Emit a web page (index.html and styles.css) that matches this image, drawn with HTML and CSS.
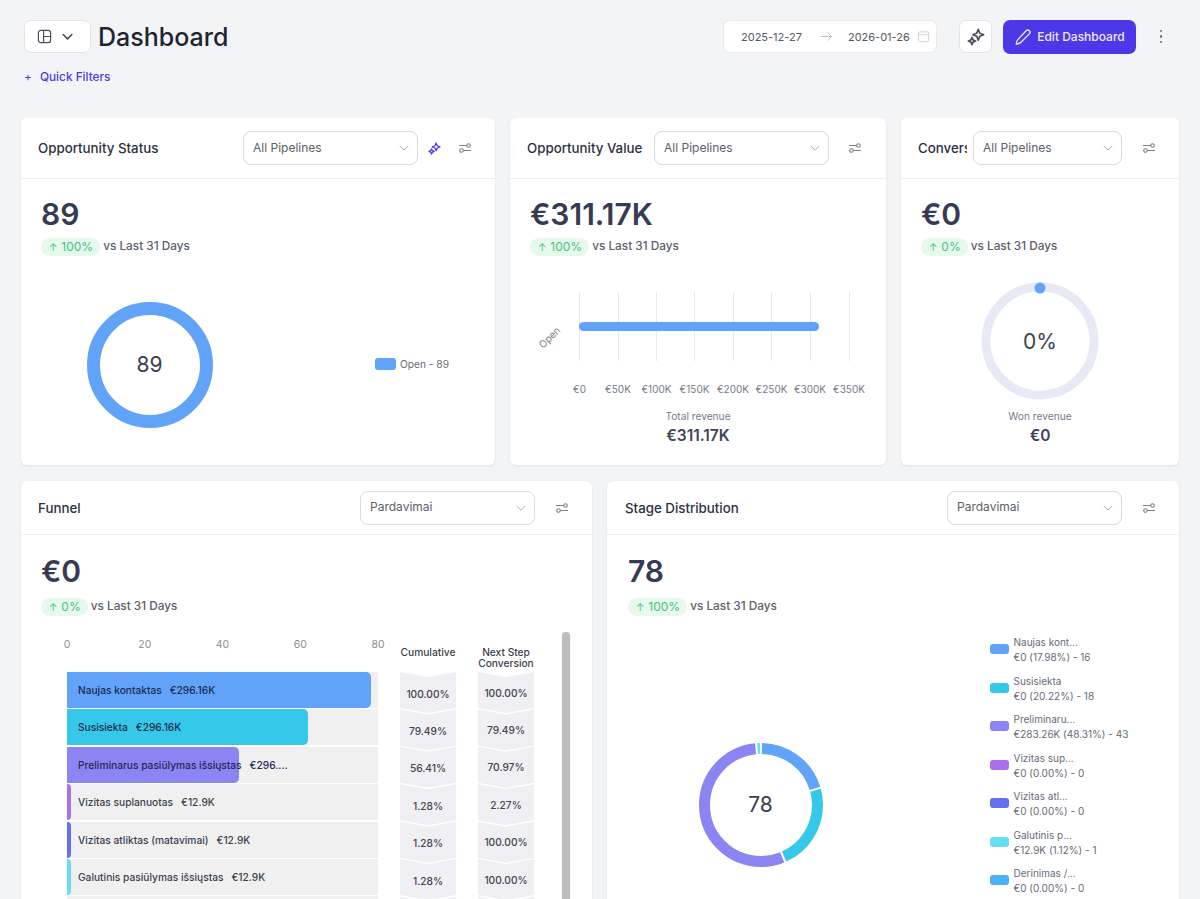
FILE: index.html
```html
<!DOCTYPE html>
<html lang="en">
<head>
<meta charset="utf-8">
<title>Dashboard</title>
<link rel="stylesheet" href="styles.css">
</head>
<body>
<svg class="defs" width="0" height="0" aria-hidden="true">
  <symbol id="sparkle" viewBox="0 0 20 20">
    <path d="M12.500 1.500l1.700 4.300 4.300 1.700-4.300 1.700-1.700 4.300-1.700-4.300-4.300-1.700 4.300-1.700z" fill="none" stroke="currentColor" stroke-width="1.900" stroke-linejoin="round"/>
    <path d="M5.500 10.500l1.200 2.800 2.800 1.200-2.800 1.200-1.200 2.800-1.200-2.800-2.800-1.200 2.800-1.200z" fill="none" stroke="currentColor" stroke-width="1.900" stroke-linejoin="round"/>
  </symbol>
  <symbol id="sliders" viewBox="0 0 14 14">
    <path d="M1.500 4.500h7M12.500 9.500h-7" fill="none" stroke="currentColor" stroke-width="1.100" stroke-linecap="round"/>
    <circle cx="10.500" cy="4.500" r="1.800" fill="none" stroke="currentColor" stroke-width="1.100"/>
    <circle cx="3.500" cy="9.500" r="1.800" fill="none" stroke="currentColor" stroke-width="1.100"/>
  </symbol>
  <symbol id="chev" viewBox="0 0 12 12">
    <path d="M2 4.200l4 4 4-4" fill="none" stroke="currentColor" stroke-width="1" stroke-linecap="round" stroke-linejoin="round"/>
  </symbol>
</svg>

<header class="topbar">
  <div class="topbar-main">
    <button class="view-btn">
      <svg class="view-icon" viewBox="0 0 16 16"><rect x="1.500" y="1.500" width="13" height="13" rx="2.500" fill="none" stroke="currentColor" stroke-width="1.300"/><path d="M7 1.500v13M7 8h7.500" fill="none" stroke="currentColor" stroke-width="1.300"/></svg>
      <svg class="view-chev" viewBox="0 0 12 12"><path d="M2 4.200l4 4 4-4" fill="none" stroke="currentColor" stroke-width="1.500" stroke-linecap="round" stroke-linejoin="round"/></svg>
    </button>
    <h1 class="page-title">Dashboard</h1>
    <div class="date-range">
      <span>2025-12-27</span>
      <svg class="date-arrow" viewBox="0 0 14 14"><path d="M1.500 7h11M8.500 3l4 4-4 4" fill="none" stroke="currentColor" stroke-width="1" stroke-linecap="round" stroke-linejoin="round"/></svg>
      <span>2026-01-26</span>
      <svg class="date-cal" viewBox="0 0 14 14"><rect x="1.500" y="2" width="11" height="10.500" rx="1.500" fill="none" stroke="currentColor" stroke-width="1"/><path d="M1.500 5h11" stroke="currentColor" stroke-width="1"/></svg>
    </div>
    <button class="ai-btn"><svg class="ai-icon"><use href="#sparkle"/></svg></button>
    <button class="edit-btn">
      <svg class="edit-icon" viewBox="0 0 16 16"><path d="M11 2.200a2 2 0 0 1 2.800 2.800l-7.600 7.700c-1 1-2.500 1.500-4.200 1.600.1-1.700.6-3.200 1.600-4.200z" fill="none" stroke="currentColor" stroke-width="1.200" stroke-linejoin="round"/></svg>
      Edit Dashboard
    </button>
    <button class="kebab"><i></i><i></i><i></i></button>
  </div>
  <div class="quick-filters"><span class="qf-plus">+</span> Quick Filters</div>
</header>

<main class="board">
  <section class="row row-top">
    <article class="card card-status">
      <header class="card-head">
        <h2 class="card-title">Opportunity Status</h2>
        <div class="select sel-175">All Pipelines<svg class="sel-chev"><use href="#chev"/></svg></div>
        <button class="icon-btn spark"><svg class="i13"><use href="#sparkle"/></svg></button>
        <button class="icon-btn after-spark"><svg class="i14"><use href="#sliders"/></svg></button>
      </header>
      <div class="card-body">
        <div class="metric">89</div>
        <div class="stat"><span class="badge"><span class="up">↑</span> 100%</span><span class="vs">vs Last 31 Days</span></div>
        <div class="donut-area">
          <div class="donut">
            <svg viewBox="0 0 126 126" width="126" height="126"><circle cx="63" cy="63" r="56.500" fill="none" stroke="#60a3f8" stroke-width="13"/></svg>
            <span class="donut-label">89</span>
          </div>
          <div class="mini-legend"><span class="swatch swatch-open"></span>Open - 89</div>
        </div>
      </div>
    </article>

    <article class="card card-value">
      <header class="card-head">
        <h2 class="card-title">Opportunity Value</h2>
        <div class="select sel-175">All Pipelines<svg class="sel-chev"><use href="#chev"/></svg></div>
        <button class="icon-btn solo"><svg class="i14"><use href="#sliders"/></svg></button>
      </header>
      <div class="card-body">
        <div class="metric">€311.17K</div>
        <div class="stat"><span class="badge"><span class="up">↑</span> 100%</span><span class="vs">vs Last 31 Days</span></div>
        <svg class="plot" viewBox="0 0 376 201" width="376" height="201">
          <g class="grid-lines">
            <path d="M69.500 28v69M108.500 28v69M146.500 28v69M184.500 28v69M223.500 28v69M261.500 28v69M300.500 28v69M339.500 28v69"/>
          </g>
          <rect x="69" y="58" width="240" height="9" rx="4.500" fill="#60a3f8"/>
          <text class="axis" transform="translate(42 76) rotate(-45)" text-anchor="middle">Open</text>
          <g class="axis" text-anchor="middle">
            <text x="69.500" y="129">€0</text><text x="108" y="129">€50K</text><text x="146.500" y="129">€100K</text><text x="184.500" y="129">€150K</text><text x="223" y="129">€200K</text><text x="261.500" y="129">€250K</text><text x="300" y="129">€300K</text><text x="339" y="129">€350K</text>
          </g>
          <text class="plot-cap" x="188" y="156" text-anchor="middle">Total revenue</text>
          <text class="plot-val" x="188" y="177" text-anchor="middle">€311.17K</text>
        </svg>
      </div>
    </article>

    <article class="card card-conv">
      <header class="card-head">
        <h2 class="card-title">Conversion</h2>
        <div class="select sel-149">All Pipelines<svg class="sel-chev"><use href="#chev"/></svg></div>
        <button class="icon-btn solo-wide"><svg class="i14"><use href="#sliders"/></svg></button>
      </header>
      <div class="card-body">
        <div class="metric">€0</div>
        <div class="stat"><span class="badge"><span class="up">↑</span> 0%</span><span class="vs">vs Last 31 Days</span></div>
        <svg class="plot" viewBox="0 0 278 201" width="278" height="201">
          <circle cx="139" cy="77" r="54" fill="none" stroke="#e8e9f7" stroke-width="9"/>
          <circle cx="139" cy="24" r="5.500" fill="#60a3f8"/>
          <text class="gauge-val" x="139" y="85" text-anchor="middle">0%</text>
          <text class="plot-cap" x="139" y="156" text-anchor="middle">Won revenue</text>
          <text class="plot-val" x="139" y="177" text-anchor="middle">€0</text>
        </svg>
      </div>
    </article>
  </section>

  <section class="row row-bottom">
    <article class="card card-funnel">
      <header class="card-head card-head-low">
        <h2 class="card-title">Funnel</h2>
        <div class="select sel-175">Pardavimai<svg class="sel-chev"><use href="#chev"/></svg></div>
        <button class="icon-btn solo-wide"><svg class="i14"><use href="#sliders"/></svg></button>
      </header>
      <div class="card-body body-low">
        <div class="metric">€0</div>
        <div class="stat stat-low"><span class="badge"><span class="up">↑</span> 0%</span><span class="vs">vs Last 31 Days</span></div>
        <div class="funnel">
          <div class="funnel-chart">
            <div class="ticks"><span class="tick"><b>0</b></span><span class="tick"><b>20</b></span><span class="tick"><b>40</b></span><span class="tick"><b>60</b></span><span class="tick"><b>80</b></span></div>
            <div class="tracks">
              <div class="track on-bar"><i class="bar" style="width:97.7%;background:#60a3f8"></i><span class="t-name">Naujas kontaktas</span><span>€296.16K</span></div>
              <div class="track on-bar"><i class="bar" style="width:77.5%;background:#35c8e9"></i><span class="t-name">Susisiekta</span><span>€296.16K</span></div>
              <div class="track on-bar"><i class="bar" style="width:55.3%;background:#8b85f3"></i><span class="t-name">Preliminarus pasiūlymas išsiųstas</span><span>€296....</span></div>
              <div class="track"><i class="bar" style="width:1.4%;background:#a970ec"></i><span class="t-name">Vizitas suplanuotas</span><span>€12.9K</span></div>
              <div class="track"><i class="bar" style="width:1.4%;background:#6470ef"></i><span class="t-name">Vizitas atliktas (matavimai)</span><span>€12.9K</span></div>
              <div class="track"><i class="bar" style="width:1.4%;background:#66def5"></i><span class="t-name">Galutinis pasiūlymas išsiųstas</span><span>€12.9K</span></div>
              <div class="track"></div>
            </div>
          </div>
          <div class="rate-col rate-cum">
            <div class="rate-head">Cumulative</div>
            <div class="cell">100.00%</div><div class="cell">79.49%</div><div class="cell">56.41%</div><div class="cell">1.28%</div><div class="cell">1.28%</div><div class="cell">1.28%</div><div class="cell"></div>
          </div>
          <div class="rate-col">
            <div class="rate-head">Next Step<br>Conversion</div>
            <div class="cell">100.00%</div><div class="cell">79.49%</div><div class="cell">70.97%</div><div class="cell">2.27%</div><div class="cell">100.00%</div><div class="cell">100.00%</div><div class="cell"></div>
          </div>
          <div class="scroll"><i></i></div>
        </div>
      </div>
    </article>

    <article class="card card-stage">
      <header class="card-head card-head-low">
        <h2 class="card-title">Stage Distribution</h2>
        <div class="select sel-175">Pardavimai<svg class="sel-chev"><use href="#chev"/></svg></div>
        <button class="icon-btn solo-wide"><svg class="i14"><use href="#sliders"/></svg></button>
      </header>
      <div class="card-body body-low">
        <div class="metric">78</div>
        <div class="stat stat-low"><span class="badge"><span class="up">↑</span> 100%</span><span class="vs">vs Last 31 Days</span></div>
        <div class="stage">
          <div class="donut stage-donut">
            <svg viewBox="0 0 124 124" width="124" height="124" class="seg">
              <circle pathLength="360" cx="62" cy="62" r="56.500" fill="none" stroke="#60a3f8" stroke-width="11" stroke-dasharray="71.800 288.200" stroke-dashoffset="-1"/>
              <circle pathLength="360" cx="62" cy="62" r="56.500" fill="none" stroke="#35c8e9" stroke-width="11" stroke-dasharray="81 279" stroke-dashoffset="-74.800"/>
              <circle pathLength="360" cx="62" cy="62" r="56.500" fill="none" stroke="#8b85f3" stroke-width="11" stroke-dasharray="196.500 163.500" stroke-dashoffset="-157.900"/>
              <circle pathLength="360" cx="62" cy="62" r="56.500" fill="none" stroke="#66def5" stroke-width="11" stroke-dasharray="2.600 357.400" stroke-dashoffset="-356.400"/>
            </svg>
            <span class="donut-label">78</span>
          </div>
          <ul class="legend">
            <li><i class="swatch" style="background:#60a3f8"></i><div>Naujas kont...<br>€0 (17.98%) - 16</div></li>
            <li><i class="swatch" style="background:#35c8e9"></i><div>Susisiekta<br>€0 (20.22%) - 18</div></li>
            <li><i class="swatch" style="background:#8b85f3"></i><div>Preliminaru...<br>€283.26K (48.31%) - 43</div></li>
            <li><i class="swatch" style="background:#a970ec"></i><div>Vizitas sup...<br>€0 (0.00%) - 0</div></li>
            <li><i class="swatch" style="background:#6470ef"></i><div>Vizitas atl...<br>€0 (0.00%) - 0</div></li>
            <li><i class="swatch" style="background:#66def5"></i><div>Galutinis p...<br>€12.9K (1.12%) - 1</div></li>
            <li><i class="swatch" style="background:#4cb2f5"></i><div>Derinimas /...<br>€0 (0.00%) - 0</div></li>
          </ul>
        </div>
      </div>
    </article>
  </section>
</main>
</body>
</html>
```

FILE: styles.css
```css
* { box-sizing: border-box; }
html, body { height: 100%; overflow: hidden; }
body { margin: 0; background: #f3f4f6; font-family: Inter, "Liberation Sans", sans-serif; color: #1f2433; }
button { font: inherit; cursor: pointer; padding: 0; border: 0; background: none; }
h1, h2, ul { margin: 0; padding: 0; }
.defs { position: absolute; }

.topbar { height: 118px; padding: 20px 0 0 24px; }
.topbar-main { display: flex; align-items: center; height: 33px; }
.view-btn { width: 67px; height: 33px; padding-right: 4px; background: #fff; border: 1px solid #e2e4e9; border-radius: 7px; display: flex; align-items: center; justify-content: center; gap: 9px; color: #4a4f5c; }
.view-icon { width: 15px; height: 15px; }
.view-chev { width: 13px; height: 13px; }
.page-title { margin: 2px 0 0 7px; font-size: 25px; font-weight: 500; line-height: 33px; color: #1f2433; }
.date-range { margin-left: auto; width: 214px; height: 33px; background: #fff; border: 1px solid #e8eaee; border-radius: 7px; display: flex; align-items: center; padding-left: 17px; font-size: 11px; color: #555a66; white-space: nowrap; }
.date-range span { flex: none; }
.date-arrow { flex: none; width: 13px; height: 13px; margin: 0 15px 0 18px; color: #b9bcc4; }
.date-cal { flex: none; width: 13px; height: 13px; margin-left: 7px; color: #cfd1d7; }
.ai-btn { width: 33px; height: 33px; margin-left: 22px; background: #fff; border: 1px solid #e2e4e9; border-radius: 7px; display: flex; align-items: center; justify-content: center; color: #4a4f5c; }
.ai-icon { width: 18px; height: 18px; }
.edit-btn { width: 133px; height: 34px; margin-left: 11px; background: #4c38e6; border-radius: 7px; color: #ebe9fd; font-size: 12px; font-weight: 500; display: flex; align-items: center; justify-content: center; gap: 5px; }
.edit-icon { width: 18px; height: 18px; }
.kebab { width: 14px; margin: 0 32px 0 18px; display: flex; flex-direction: column; align-items: center; gap: 3px; }
.kebab i { width: 2.500px; height: 2.500px; border-radius: 50%; background: #6a6f7b; }
.quick-filters { margin-top: 15px; font-size: 11.800px; font-weight: 500; color: #4f3ae0; line-height: 18px; }
.qf-plus { margin-right: 5px; font-weight: 400; }

.board { padding: 0 21px; display: flex; flex-direction: column; gap: 16px; }
.row { display: flex; gap: 15px; }
.row-top { height: 347px; }
.row-top .card-status { width: 474px; }
.row-top .card-value { width: 376px; }
.row-top .card-conv { width: 278px; }
.row-bottom { height: 600px; }
.card-funnel { width: 571px; flex: none; }
.card-stage { flex: 1 1 0; }
.card { background: #fff; border-radius: 6px; box-shadow: 0 1px 3px rgba(30, 35, 60, .08); display: flex; flex-direction: column; overflow: hidden; }
.card-head { height: 61px; flex: none; display: flex; align-items: center; padding: 0 17px; border-bottom: 1px solid #eceef1; }
.card-head-low { height: 54px; }
.card-stage .card-head { padding-left: 18px; }
.card-stage .metric, .card-stage .stat { margin-left: 1px; }
.card-title { flex: 1 1 0; min-width: 0; overflow: hidden; white-space: nowrap; font-size: 13.300px; font-weight: 500; color: #2c3140; margin-right: 6px; }
.select { flex: none; height: 34px; padding: 0 0 2px 9px; background: #fff; border: 1px solid #d8dae0; border-radius: 8px; display: flex; align-items: center; justify-content: space-between; font-size: 12px; color: #5b606c; }
.sel-175 { width: 175px; }
.sel-149 { width: 149px; }
.sel-chev { width: 12px; height: 12px; margin: 2px 7px 0 0; color: #a8acb5; }
.icon-btn { flex: none; width: 26px; height: 26px; display: flex; align-items: center; justify-content: center; color: #787d89; }
.i14 { width: 14px; height: 14px; }
.i13 { width: 13px; height: 13px; }
.spark { margin-left: 3px; color: #4c38e6; }
.after-spark { margin-left: 5px; }
.solo { margin-left: 13px; margin-right: 1px; }
.solo-wide { margin-left: 14px; }

.card-body { flex: 1; padding: 17px 20px 0; display: flex; flex-direction: column; min-height: 0; }
.body-low { padding-top: 18px; }
.metric { font-size: 30px; font-weight: 600; line-height: 36px; color: #363b54; }
.stat { margin-top: 6px; height: 18px; display: flex; align-items: center; font-size: 11.800px; font-weight: 500; color: #5b606c; }
.stat-low { margin-top: 9px; }
.badge { height: 18px; padding: 0 7px 0 8px; margin-right: 3px; border-radius: 9px; background: #e6f9ec; color: #3dc47c; font-size: 12px; font-weight: 400; display: flex; align-items: center; gap: 4px; line-height: 18px; }
.up { font-size: 10px; }
.vs { line-height: 16px; margin-top: -2px; }

.donut-area { flex: 1; display: flex; align-items: center; margin-top: 8px; }
.donut { position: relative; width: 126px; height: 126px; margin-left: 45.500px; flex: none; }
.donut svg { display: block; }
.donut-label { position: absolute; inset: 0; display: flex; align-items: center; justify-content: center; font-size: 21px; color: #3a3f55; }
.mini-legend { margin: 0 26px 2px auto; display: flex; align-items: center; gap: 4px; font-size: 10.200px; color: #666b78; }
.swatch { flex: none; width: 21px; height: 12px; border-radius: 3px; }
.swatch-open { background: #60a3f8; }

.plot { display: block; flex: none; margin: 8px -20px 0; }
.grid-lines path { stroke: #e7e8ec; stroke-width: 1; fill: none; }
.axis { font-size: 10px; fill: #757a89; }
.plot-cap { font-size: 10.200px; fill: #757a89; }
.plot-val { font-size: 15.500px; font-weight: 600; fill: #3f4456; }
.gauge-val { font-size: 21px; fill: #3a3f55; }

.funnel { margin: 16px 0 0 0; display: flex; height: 300px; }
.funnel-chart { margin-left: 26px; width: 311px; flex: none; }
.ticks { display: flex; justify-content: space-between; height: 40px; }
.tick { width: 0; display: flex; justify-content: center; font-size: 10.500px; color: #8a8e99; line-height: 26px; }
.tick b { font-weight: 400; }
.tracks { display: flex; flex-direction: column; gap: 1.400px; }
.track { position: relative; flex: none; height: 36px; background: #f0f0f1; display: flex; align-items: center; gap: 8px; padding-left: 11px; font-size: 10.200px; font-weight: 500; color: #3a3f4c; white-space: nowrap; }
.track > span { position: relative; }
.on-bar { color: #1d2a52; }
.bar { position: absolute; left: 0; top: 0; bottom: 0; border-radius: 0 5px 5px 0; }
.rate-col { width: 56px; margin-left: 22px; flex: none; display: flex; flex-direction: column; }
.rate-head { height: 40px; padding-top: 15px; text-align: center; font-size: 10.200px; font-weight: 500; line-height: 10.500px; color: #3a3f4c; white-space: nowrap; flex: none; }
.cell { flex: none; height: 41px; margin-bottom: -3.600px; background: #f0f0f4; clip-path: polygon(0 0, 50% 5px, 100% 0, 100% 36px, 50% 100%, 0 36px); display: flex; align-items: center; justify-content: center; font-size: 10.200px; font-weight: 500; color: #3f4452; }
.rate-cum .cell { padding-top: 2px; }
.scroll { margin-left: 27px; width: 10px; flex: none; background: #f6f6f6; padding: 0 1px; }
.scroll i { display: block; height: 100%; background: #bdbdbd; border-radius: 4px 4px 0 0; }

.stage { display: flex; align-items: flex-start; margin-top: 18px; }
.stage-donut { width: 124px; height: 124px; margin: 108.500px 0 0 71.500px; }
.seg circle { transform: rotate(-90deg); transform-origin: 62px 62px; }
.legend { list-style: none; margin-left: 167px; display: flex; flex-direction: column; gap: 8.500px; margin-top: 1px; }
.legend li { display: flex; align-items: center; gap: 5px; height: 30px; font-size: 10px; line-height: 15px; color: #666b78; white-space: nowrap; }
.legend .swatch { width: 19px; height: 10px; margin-bottom: 2px; }
```
